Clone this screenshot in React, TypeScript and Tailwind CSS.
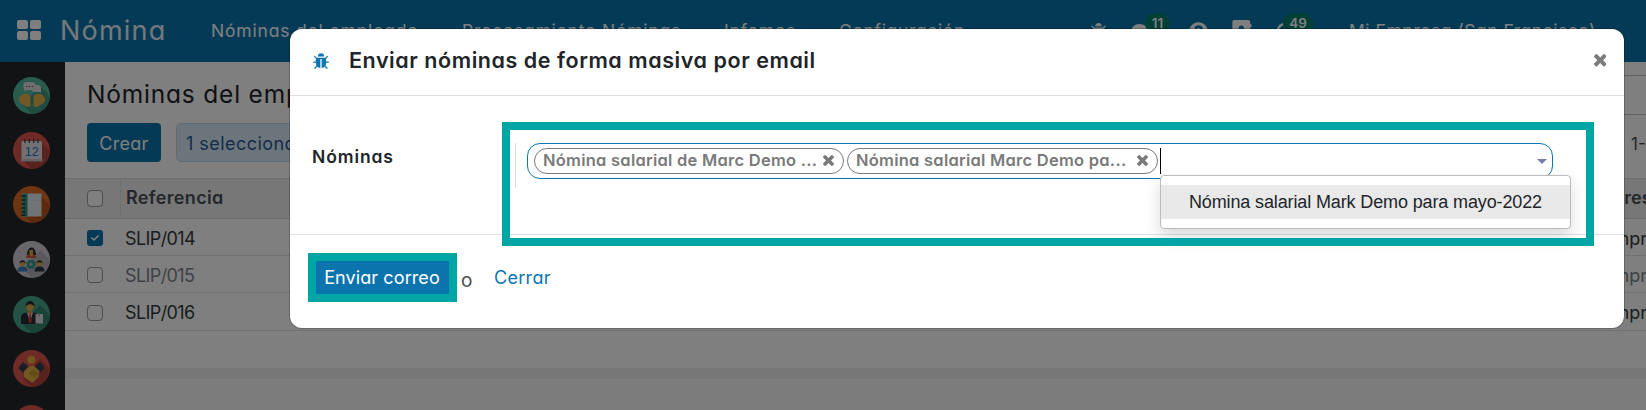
import React from "react";
import { FaComment, FaQuestionCircle, FaAddressBook, FaCheck } from "react-icons/fa";

function Bug({ className }: { className: string }) {
  return (
    <svg viewBox="32 0 1600 1664" className={className} fill="currentColor">
      <path d="M1632 896q0 26-19 45t-45 19h-224q0 171-67 290l208 209q19 19 19 45t-19 45q-18 19-45 19t-45-19l-198-197q-5 5-15 13t-42 28.500-65 36.500-82 29-97 13v-896h-128v896q-51 0-101.500-13.500t-87-33-66-39-43.500-32.500l-15-14-183 207q-20 21-48 21-24 0-43-17-19-18-20.500-44.500t15.500-46.500l202-227q-58-114-58-274h-224q-26 0-45-19t-19-45 19-45 45-19h224v-294l-173-173q-19-19-19-45t19-45 45-19 45 19l173 173h844l173-173q19-19 45-19t45 19 19 45-19 45l-173 173v294h224q26 0 45 19t19 45zm-480-576h-640q0-133 93.500-226.500t226.500-93.500 226.500 93.500 93.500 226.500z" />
    </svg>
  );
}

function Cross({ className }: { className: string }) {
  return (
    <svg viewBox="302 366 1188 1188" className={className} fill="currentColor">
      <path d="M1490 1322q0 40-28 68l-136 136q-28 28-68 28t-68-28l-294-294-294 294q-28 28-68 28t-68-28l-136-136q-28-28-28-68t28-68l294-294-294-294q-28-28-28-68t28-68l136-136q28-28 68-28t68 28l294 294 294-294q28-28 68-28t68 28l136 136q28 28 28 68t-28 68l-294 294 294 294q28 28 28 68z" />
    </svg>
  );
}

function Disc({ color, shade, children }: { color: string; shade: string; children: React.ReactNode }) {
  return (
    <svg viewBox="0 0 37 37" className="block h-[37px] w-[37px] shrink-0">
      <circle cx="18.5" cy="18.5" r="18.5" fill={color} />
      <path d="M27 9l9.5 9.5A18.5 18.5 0 0 1 18.5 37L10 28z" fill={shade} />
      {children}
    </svg>
  );
}

function Person({ x, y, shirt }: { x: number; y: number; shirt: string }) {
  return (
    <g transform={`translate(${x} ${y})`}>
      <path d="M-5 11c0-4 2-5 5-5s5 1 5 5z" fill={shirt} />
      <circle cx="0" cy="3" r="2.7" fill="#e0aa45" />
      <path d="M-3 3c-.3-4.500 6.300-4.500 6 0-1-1.700-5-1.700-6 0z" fill="#2c2f38" />
    </g>
  );
}

function Sidebar() {
  return (
    <aside className="flex w-[65px] shrink-0 flex-col items-center gap-[17.7px] overflow-hidden bg-[#22262a] pt-[15px] pr-[2px]">
      <Disc color="#52b99f" shade="#409880">
        <path d="M10.500 8a3 3 0 0 1 3-3h6a3.500 3.500 0 0 1 3 3h2a3.500 3.500 0 0 1 3.500 3.500v4.500l-2-1h-5a3 3 0 0 1-2.500-2h-4.500l-2.500 1.500v-2a3 3 0 0 1-1-2z" fill="#dcdce2" />
        <circle cx="13.500" cy="9.500" r=".8" fill="#b0453c" />
        <circle cx="16.500" cy="9.500" r=".8" fill="#b0453c" />
        <circle cx="19.500" cy="9.500" r=".8" fill="#b0453c" />
        <path d="M12 17c3-1 5.500 1 5.500 4v8c-3 2-5.500.500-6.500-1.500-3 0-5-2.500-5-5 0-3 2.500-5.500 6-5.500z" fill="#e3b14a" />
        <path d="M26 17c-3-1-5.500 1-5.500 4v8c3 2 5.500.500 6.500-1.500 3 0 5-2.500 5-5 0-3-2.500-5.500-6-5.500z" fill="#e3b14a" />
      </Disc>
      <Disc color="#dc544c" shade="#b5443e">
        <rect x="8.500" y="9" width="20.500" height="20" rx="1.500" fill="#dfe2e8" />
        <path d="M8 27h21.500v2.500h-21.500z" fill="#c3c7ce" />
        <path d="M12 7v4M16.300 7v4M20.700 7v4M25 7v4" stroke="#333740" strokeWidth="1.200" />
        <text x="18.700" y="23.500" textAnchor="middle" fontSize="12.500" fontFamily="Liberation Sans, sans-serif" fill="#3f71b8">12</text>
      </Disc>
      <Disc color="#dd6a25" shade="#b8551c">
        <path d="M9.500 7.500h19v23h-19z" fill="#e2e8ea" />
        <path d="M9.500 7.500h5v23h-5z" fill="#23977e" />
        <path d="M8.300 10h4M8.300 14h4M8.300 18h4M8.300 22h4M8.300 26h4M8.300 29.300h4" stroke="#2d3440" strokeWidth="1.500" />
        <path d="M18 14.500h8" stroke="#c8ced2" strokeDasharray="1.500 1" />
      </Disc>
      <Disc color="#d2cdd6" shade="#b6b1bb">
        <path d="M14 14c0-10 9-10 9 0z" fill="#2c2f38" />
        <path d="M13 17c0-3 2.500-4 5-4s5 1 5 4z" fill="#cb5330" />
        <path d="M16.500 9h3.500v5l-1.700 1.500-1.800-1.500z" fill="#e0aa45" />
        <Person x={9.500} y={19.500} shirt="#3b7cc0" />
        <Person x={26.500} y={19.500} shirt="#2b3443" />
        <circle cx="18" cy="23.300" r="2.900" fill="none" stroke="#2f9a82" strokeWidth="2.300" />
        <circle cx="18" cy="23.300" r="4.400" fill="none" stroke="#2f9a82" strokeWidth="1.200" strokeDasharray="2 1.450" />
      </Disc>
      <Disc color="#45a68b" shade="#358770">
        <path d="M8 28v-7c0-3 3-4 6-4.500h6c3 .5 6 1.500 6 4.500v7z" fill="#252b36" />
        <path d="M14 16.500h6l-3 9z" fill="#e6e8ec" />
        <path d="M16.300 18h1.600l.8 7-1.600 3-1.500-3z" fill="#cf4038" />
        <path d="M15 13h4v4l-2 1.500-2-1.500z" fill="#c9953a" />
        <ellipse cx="17" cy="10.500" rx="3.800" ry="4.500" fill="#e0aa45" />
        <path d="M12.800 11c-1-8 9.500-8 8.500 0-1-3.500-7-4-8.500 0z" fill="#252b36" />
        <path d="M22.500 18h7.500v9.500h-7.500z" fill="#dcdce2" />
        <path d="M26.200 17v3.500" stroke="#8b8f99" />
      </Disc>
      <Disc color="#dc544c" shade="#b5443e">
        <circle cx="18.300" cy="9.800" r="4" fill="#e0aa3a" />
        <path d="M5.500 18l4.500-6 5 4-5 7z" fill="#2b3f50" />
        <path d="M31.500 18l-4.500-6-5 4 5 7z" fill="#2b3f50" />
        <path d="M11 21.500l6-5.500h4l5.500 5-1 6-6 6-8.500-6z" fill="#e0b040" />
        <path d="M15 23l6-4 5 4-4 5z" fill="#cb9a30" />
      </Disc>
      <Disc color="#dc544c" shade="#b5443e">{null}</Disc>
    </aside>
  );
}

function Navbar() {
  return (
    <header className="flex h-[62px] shrink-0 items-center bg-[#0a75ac] whitespace-nowrap text-white">
      <div className="mb-[3px] ml-[17px] grid w-6 shrink-0 grid-cols-2 gap-[2px]">
        <i className="h-[9px] rounded-[2px] bg-white" />
        <i className="h-[9px] rounded-[2px] bg-white" />
        <i className="h-[9px] rounded-[2px] bg-white" />
        <i className="h-[9px] rounded-[2px] bg-white" />
      </div>
      <span className="ml-[19px] w-[151px] shrink-0 text-[27px] tracking-[1.2px] opacity-90">Nómina</span>
      <nav className="flex shrink-0 text-[17.5px]">
        <span className="w-[251px] tracking-[0.82px]">Nóminas del empleado</span>
        <span className="w-[262px] tracking-[0.77px]">Procesamiento Nóminas</span>
        <span className="w-[115px] tracking-[0.82px]">Infomes</span>
        <span className="w-[251px] tracking-[0.65px]">Configuración</span>
      </nav>
      <div className="flex shrink-0 items-center">
        <span className="w-[41px]"><Bug className="h-[17px] w-[17px]" /></span>
        <span className="relative w-[58px]">
          <FaComment className="h-4 w-[17px]" />
          <b className="absolute -top-[10px] left-[14px] flex h-[21px] w-[25px] items-center justify-center rounded-full bg-[#017e6b] text-[13.5px] font-semibold">11</b>
        </span>
        <span className="w-[43px]"><FaQuestionCircle className="h-[19px] w-[19px]" /></span>
        <span className="w-[44px]"><FaAddressBook className="h-[22px] w-[20px]" /></span>
        <span className="relative w-[73px]">
          <svg viewBox="0 0 20 20" className="h-[19px] w-[19px] fill-none stroke-white stroke-[2.6]">
            <circle cx="10" cy="10" r="8.200" />
            <path d="M10 5.500v5H7" />
          </svg>
          <b className="absolute -top-[9px] left-[7px] flex h-[21px] w-[30px] items-center justify-center rounded-full bg-[#017e6b] text-[13.5px] font-semibold">49</b>
        </span>
        <span className="text-[17.5px] tracking-[0.5px]">Mi Empresa (San Francisco)</span>
      </div>
    </header>
  );
}

const rows = [
  { ref: "SLIP/014", on: true, tone: "text-[#333a40]", h: "h-[37px]" },
  { ref: "SLIP/015", on: false, tone: "text-[#7d848a]", h: "h-[37px]" },
  { ref: "SLIP/016", on: false, tone: "text-[#333a40]", h: "h-[38px]" },
];

function Page() {
  return (
    <main className="flex min-w-0 flex-1 flex-col overflow-hidden bg-white whitespace-nowrap">
      <div className="flex h-[61px] shrink-0 items-center pl-[22px]">
        <h1 className="w-[1000px] pt-[3px] text-[24.5px] tracking-[0.8px] text-[#1f2328]">Nóminas del empleado</h1>
        <div className="mt-[5px] h-10 flex-1 border-y border-[#c4c4c4]" />
      </div>
      <div className="flex h-[55px] shrink-0 items-start pl-[22px] text-[18px]">
        <button className="h-[39px] w-[74px] rounded-[4px] bg-[#0a75ac] pt-px tracking-[0.3px] text-white">Crear</button>
        <div className="ml-[15px] flex h-[39px] w-[190px] items-center rounded-[5px] border border-[#bfd8ee] bg-[#dbeaf8] pt-px pl-[9px] tracking-[0.45px] text-[#275a92]">1 seleccionado</div>
        <span className="ml-auto flex h-[44px] w-[15px] items-center text-[17px] text-[#4c4c4c]">1-3</span>
      </div>
      <div className="flex h-[41px] shrink-0 items-center border-t border-b border-[#dadada] bg-[#eeeeee] text-[18px] font-semibold text-[#4a4f55]">
        <div className="flex h-full w-14 shrink-0 items-center border-r border-dotted border-[#d0d0d0] pl-[22px]">
          <i className="h-[17px] w-4 rounded-[4px] border border-[#9a9a9a] bg-white" />
        </div>
        <span className="w-[1465px] shrink-0 pb-[2px] pl-[5px] tracking-[0.35px]">Referencia</span>
        <span className="pb-[2px]">Empresa</span>
      </div>
      {rows.map((r) => (
        <div key={r.ref} className={`flex shrink-0 items-center border-b border-[#dee2e6] pt-[2px] text-[18px] ${r.h} ${r.tone}`}>
          <div className="w-14 shrink-0 pl-[22px]">
            {r.on ? (
              <i className="flex h-4 w-4 items-center justify-center rounded-[3px] bg-[#0a75ac]"><FaCheck className="h-2 w-2 text-white" /></i>
            ) : (
              <i className="block h-4 w-4 rounded-[4px] border border-[#9a9a9a] bg-white" />
            )}
          </div>
          <span className="w-[1456px] shrink-0 pl-1 tracking-[-0.6px]">{r.ref}</span>
          <span>Mi Empresa</span>
        </div>
      ))}
      <div className="h-[37px] shrink-0" />
      <div className="h-[11px] shrink-0 bg-[#eeeeee]" />
      <div className="flex-1 bg-[#f9f9f9]" />
    </main>
  );
}

function Tag({ label, width }: { label: string; width: string }) {
  return (
    <span className={`flex h-[26px] shrink-0 items-center justify-between rounded-full border border-[#7a7a7a] pr-[9px] pb-px pl-2 text-[16.5px] font-semibold tracking-[0.25px] text-[#7a7a7a] ${width}`}>
      {label}
      <Cross className="h-[11px] w-[11px]" />
    </span>
  );
}

function Dialog() {
  return (
    <section className="absolute top-[29px] left-[290px] flex h-[299px] w-[1334px] flex-col rounded-[12px] bg-white whitespace-nowrap text-[#212529] shadow-[0_0_0_1px_rgba(0,0,0,0.2)]">
      <header className="flex h-[67px] shrink-0 items-center border-b border-[#dfdfdf] pr-[18px] pb-[3px] pl-[23px]">
        <Bug className="mt-px h-[17px] w-4 text-[#0b76b0]" />
        <h2 className="ml-[20px] text-[21.5px] font-semibold tracking-[0.56px]">Enviar nóminas de forma masiva por email</h2>
        <Cross className="ml-auto h-[12.5px] w-[12.5px] text-[#7c7c7c]" />
      </header>
      <div className="flex h-[139px] shrink-0 border-b border-[#dee2e6] pl-[22px]">
        <span className="mt-[48px] w-[203px] text-[17.5px] leading-[26px] font-semibold tracking-[0.9px]">Nóminas</span>
        <div className="mt-[47px] h-[45px] border-l border-[#dddddd] pl-[11px]">
          <div className="relative flex h-9 w-[1026px] items-center gap-[3px] rounded-[13px] border border-[#0b76b0] pl-[6px]">
            <Tag label="Nómina salarial de Marc Demo ..." width="w-[310px]" />
            <Tag label="Nómina salarial Marc Demo pa..." width="w-[311px]" />
            <i className="-ml-px h-[26px] w-px bg-black" />
            <i className="mt-px mr-[5px] ml-auto h-0 w-0 border-x-[5px] border-t-[5px] border-x-transparent border-t-[#7c7bad]" />
            <ul className="absolute top-[31px] left-[632px] h-[54px] w-[411px] rounded-[4px] border border-[#bcbcbc] bg-white py-[9px] font-['Liberation_Sans',sans-serif] text-[18px] tracking-[-0.13px] shadow-[0_8px_16px_rgba(0,0,0,0.15)]">
              <li className="flex h-[34px] items-center bg-[#e9e9e9] pl-[28px]">Nómina salarial Mark Demo para mayo-2022</li>
            </ul>
          </div>
        </div>
      </div>
      <footer className="flex items-start pt-[18px] pl-[18px] text-[18px]">
        <button className="h-[49px] w-[149px] border-8 border-[#00a5a5] bg-[#0b74ad] pr-px tracking-[0.1px] text-white">Enviar correo</button>
        <span className="ml-[4px] w-[33px] text-[19px] leading-[55px] text-[#4c4c4c]">o</span>
        <a className="leading-[49px] tracking-[0.3px] text-[#0b76b0]">Cerrar</a>
      </footer>
      <div className="pointer-events-none absolute top-[93px] left-[212px] h-[124px] w-[1092px] border-8 border-[#00a5a5]" />
    </section>
  );
}

export default function App() {
  return (
    <div className="relative flex h-[410px] w-full flex-col overflow-hidden font-['Inter',sans-serif] [font-feature-settings:'cv11']">
      <Navbar />
      <div className="flex min-h-0 flex-1">
        <Sidebar />
        <Page />
      </div>
      <div className="absolute inset-0 bg-black/50" />
      <Dialog />
    </div>
  );
}
